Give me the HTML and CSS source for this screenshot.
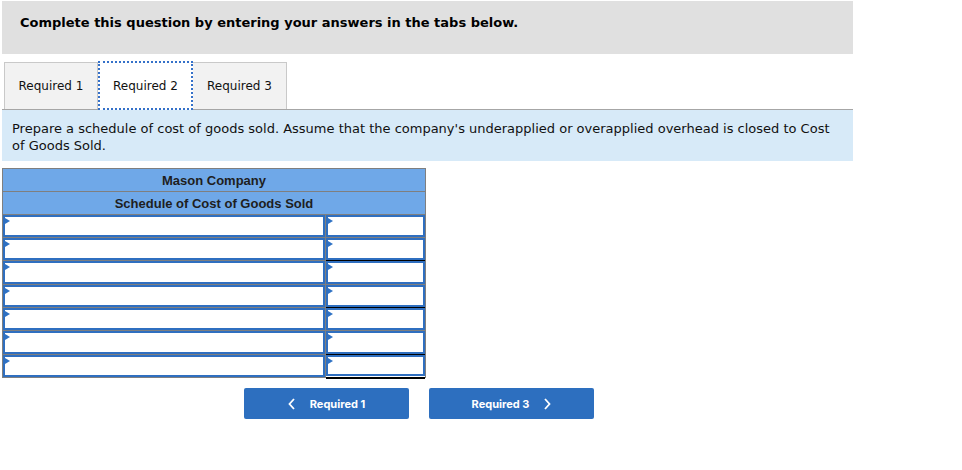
FILE: index.html
```html
<!DOCTYPE html>
<html>
<head>
<meta charset="utf-8">
<link rel="stylesheet" href="styles.css">
</head>
<body>
<div class="page">
  <div class="banner">Complete this question by entering your answers in the tabs below.</div>
  <div class="tabs">
    <div class="tab">Required 1</div>
    <div class="tab active">Required 2</div>
    <div class="tab">Required 3</div>
  </div>
  <div class="prompt">Prepare a schedule of cost of goods sold. Assume that the company's underapplied or overapplied overhead is closed to Cost of Goods Sold.</div>
  <div class="sheet">
    <div class="head">Mason Company</div>
    <div class="head">Schedule of Cost of Goods Sold</div>
    <div class="grid">
      <div class="cell"><span class="tri"></span></div><div class="cell"><span class="tri"></span></div>
      <div class="cell"><span class="tri"></span></div><div class="cell under"><span class="tri"></span></div>
      <div class="cell"><span class="tri"></span></div><div class="cell"><span class="tri"></span></div>
      <div class="cell"><span class="tri"></span></div><div class="cell under"><span class="tri"></span></div>
      <div class="cell"><span class="tri"></span></div><div class="cell"><span class="tri"></span></div>
      <div class="cell"><span class="tri"></span></div><div class="cell under"><span class="tri"></span></div>
      <div class="cell"><span class="tri"></span></div><div class="cell double"><span class="tri"></span></div>
    </div>
  </div>
  <div class="nav">
    <button class="btn"><svg width="8" height="12" viewBox="0 0 8 12"><path d="M6 1 L1.5 6 L6 11" fill="none" stroke="#fff" stroke-width="1.8"/></svg><span>Required 1</span></button>
    <button class="btn"><span>Required 3</span><svg width="8" height="12" viewBox="0 0 8 12"><path d="M2 1 L6.5 6 L2 11" fill="none" stroke="#fff" stroke-width="1.8"/></svg></button>
  </div>
</div>
</body>
</html>
```
FILE: styles.css
```css
html, body { margin: 0; padding: 0; background: #fff; }
.page { margin: 1px 0 0 2px; width: 851px; font-family: "DejaVu Sans", Verdana, sans-serif; color: #000; }
.banner { height: 53px; box-sizing: border-box; padding: 14px 18px 0; background: #e0e0e0; font-weight: bold; font-size: 13px; line-height: 16px; }
.tabs { display: flex; margin-top: 8px; padding-left: 2px; height: 47px; border-bottom: 1px solid #a6a6a6; }
.tab { box-sizing: border-box; width: 94px; height: 47px; background: #f2f2f2; border: 1px solid #c9c9c9; border-bottom: none; font-size: 12px; display: flex; align-items: center; justify-content: center; color: #111; }
.tab + .tab { border-left: none; }
.tab.active { width: 95px; background: #fff; border: 2px dotted #3571c9; height: 49px; margin-top: -1px; margin-bottom: -1px; position: relative; z-index: 1; }
.prompt { background: #d7eaf8; height: 51px; box-sizing: border-box; padding: 10px 10px 0; font-size: 13px; line-height: 17px; color: #111; }
.sheet { margin-top: 7px; width: 424px; background: #7f7f7f; padding: 1px 1px 1px 1px; box-sizing: border-box; font-family: "Liberation Sans", Arial, sans-serif; }
.head { background: #6fa8e8; height: 22px; line-height: 23px; text-align: center; font-weight: bold; font-size: 13px; color: #1e1e1e; }
.head + .head { margin-top: 1px; }
.grid { margin-top: 1px; display: grid; grid-template-columns: 322px 99px; grid-template-rows: 22px 22px 23px 22px 22px 23px 22px; column-gap: 1px; row-gap: 1px; }
.cell { position: relative; box-sizing: border-box; background: #fff; border: 2px solid #2f6fc0; }
.cell.under { box-shadow: 0 2px 0 0 #000; }
.cell.double { margin-bottom: 1px; box-shadow: 0 1px 0 0 #fff, 0 3px 0 0 #000; }
.tri { position: absolute; left: 0; top: 1px; width: 0; height: 0; border-top: 3px solid transparent; border-bottom: 3px solid transparent; border-left: 5px solid #2f72c4; }
.nav { display: flex; gap: 20px; margin: 10px 0 0 242px; }
.btn { width: 165px; height: 31px; background: #2d6fbf; border: none; border-radius: 2px; color: #fff; font-family: Inter, Roboto, sans-serif; font-weight: bold; font-size: 11px; display: flex; align-items: center; justify-content: center; gap: 14px; padding: 0; }
```
